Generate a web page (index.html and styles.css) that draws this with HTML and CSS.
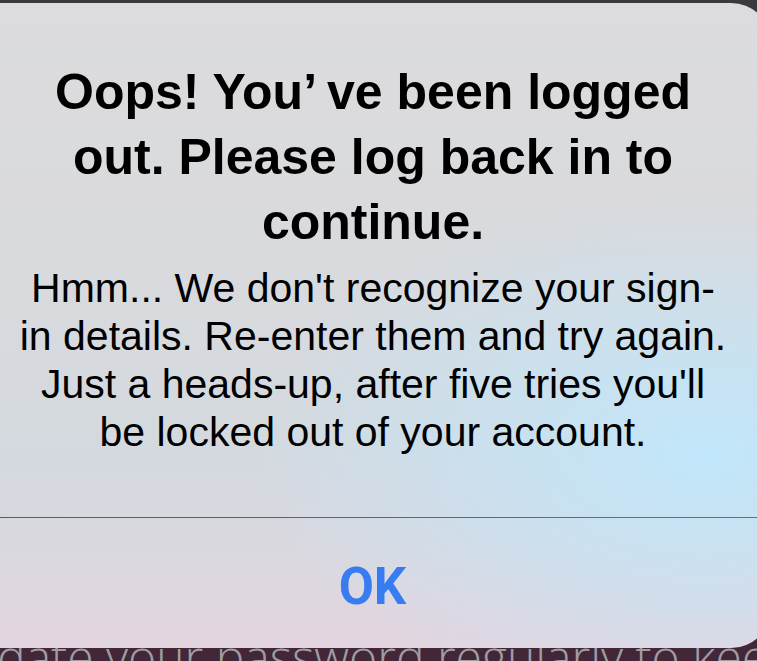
FILE: index.html
```html
<!DOCTYPE html>
<html lang="en">
<head>
    <meta charset="UTF-8">
    <meta name="viewport" content="width=device-width, initial-scale=1.0">
    <title>Logged out</title>
    <link rel="stylesheet" href="styles.css">
</head>
<body>

<div class="screen">
    <div class="alert">
        <div class="alert-body">
            <h1 class="alert-title">Oops! You’&#8201;ve been logged<br>out. Please log back in to<br>continue.</h1>
            <p class="alert-message">Hmm... We don't recognize your sign-<br>in details. Re-enter them and try again.<br>Just a heads-up, after five tries you'll<br>be locked out of your account.</p>
        </div>
        <div class="alert-divider"></div>
        <div class="alert-actions">
            <button class="alert-button">OK</button>
        </div>
    </div>
    <p class="backdrop-text">Update your password regularly to keep your account secure.</p>
</div>

</body>
</html>
```

FILE: styles.css
```css
body {
    margin: 0;
    font-family: "Liberation Sans", Arial, sans-serif;
}
.screen {
    height: 661px;
    overflow: hidden;
    background: linear-gradient(to bottom, #3a3a3c 0, #3a3a3c 45%, #432739 55%, #432739 100%);
}
.alert {
    position: relative;
    z-index: 1;
    margin: 3px -14px 0 -40px;
    border-radius: 40px;
    background:
        radial-gradient(ellipse 55% 40% at 92% 70%, rgba(192, 231, 252, 0.95), rgba(192, 231, 252, 0) 100%),
        linear-gradient(180deg, #dcdcde 0%, #d9dadd 35%, #d4d9df 70%, #dad8df 85%, #e3d5df 100%);
}
.alert-body {
    padding: 57px 40px 61px 55px;
    text-align: center;
    color: #000;
}
.alert-title {
    margin: 0;
    font-size: 50px;
    line-height: 65px;
    font-weight: bold;
}
.alert-message {
    margin: 9px 0 0;
    font-size: 41px;
    line-height: 48px;
}
.alert-divider {
    height: 1px;
    background: linear-gradient(90deg, #4a5c74, #3a7cc0);
}
.alert-actions {
    height: 130px;
    padding-top: 6px;
    box-sizing: border-box;
    display: flex;
    align-items: center;
    justify-content: center;
}
.alert-button {
    background: none;
    border: none;
    padding: 0;
    margin-left: 14px;
    font-family: Roboto, "Liberation Sans", sans-serif;
    font-weight: 700;
    font-size: 51px;
    color: #387cf2;
    cursor: pointer;
}
.backdrop-text {
    margin: -24px 0 0 -66px;
    white-space: nowrap;
    font-family: "Open Sans", sans-serif;
    font-weight: 300;
    font-size: 48px;
    color: #a09da1;
}
```
